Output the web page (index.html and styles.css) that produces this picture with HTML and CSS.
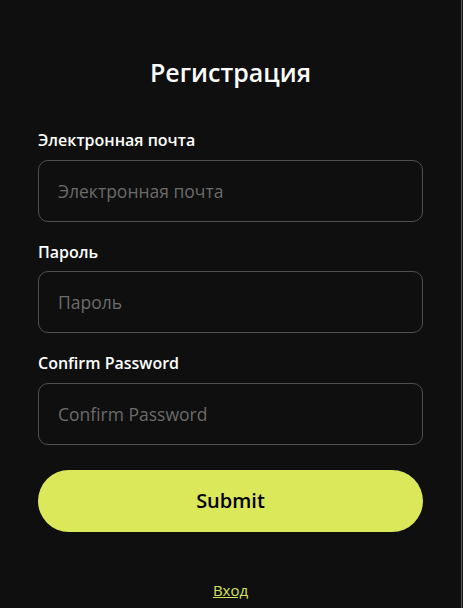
FILE: index.html
```html
<!DOCTYPE html>
<html lang="ru">
<head>
	<meta charset="UTF-8">
	<title>Регистрация</title>
	<link rel="stylesheet" href="styles.css">
</head>
<body>
	<div class="page">
		<form class="form">
			<h1>Регистрация</h1>
			<div class="field">
				<label for="email">Электронная почта</label>
				<input type="email" id="email" placeholder="Электронная почта">
			</div>
			<div class="field">
				<label for="password">Пароль</label>
				<input type="password" id="password" placeholder="Пароль">
			</div>
			<div class="field">
				<label for="confirm">Confirm Password</label>
				<input type="password" id="confirm" placeholder="Confirm Password">
			</div>
			<button type="submit">Submit</button>
			<a class="login" href="#">Вход</a>
		</form>
	</div>
</body>
</html>
```

FILE: styles.css
```css
html,body{
	margin: 0;
	padding: 0;
	background: #0f0f0f;
}
body{
	font-family: "Open Sans", "Noto Sans", sans-serif;
	color: #fff;
}
.page{
	width: 461px;
	min-height: 608px;
	border-right: 1px solid #5a5a5a;
}
.form{
	display: flex;
	flex-direction: column;
	padding: 56px 38px 0 38px;
}
h1{
	margin: 0 0 42px;
	font-size: 25px;
	line-height: 32px;
	font-weight: 600;
	text-align: center;
}
.field{
	display: flex;
	flex-direction: column;
	gap: 9.5px;
	margin-bottom: 20px;
}
label{
	font-size: 16px;
	line-height: 20px;
	font-weight: 600;
}
input{
	box-sizing: border-box;
	height: 62px;
	padding: 0 19px;
	background: #0f0f0f;
	border: 1px solid #505050;
	border-radius: 10px;
	font-family: inherit;
	font-size: 17.5px;
	color: #fff;
	outline: none;
}
input::placeholder{
	color: #6b6b6b;
}
button{
	margin-top: 5px;
	height: 62px;
	border: none;
	border-radius: 31px;
	background: #dbe85a;
	font-family: inherit;
	font-size: 20px;
	font-weight: 600;
	color: #000;
}
.login{
	align-self: center;
	margin-top: 48px;
	font-size: 15px;
	line-height: 20px;
	color: #d2e45a;
}
```
